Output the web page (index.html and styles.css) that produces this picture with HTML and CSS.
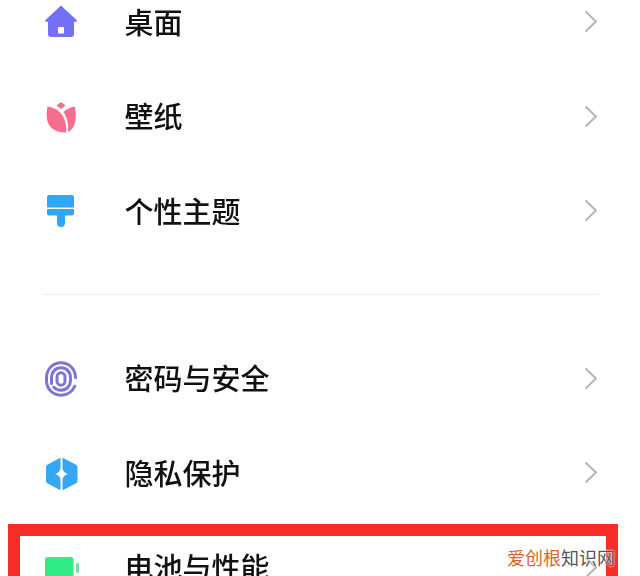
FILE: index.html
```html
<!DOCTYPE html>
<html lang="zh-CN">
<head>
<meta charset="utf-8">
<title>设置</title>
<link rel="stylesheet" href="styles.css">
</head>
<body>
<main class="page">
  <ul class="group">
    <li class="row">
      <svg class="icon" viewBox="0 0 36 36"><path fill="#7470f5" d="M18 .5 33.500 15c.7.7.3 1.800-.7 1.800H31V29a3 3 0 0 1-3 3H8a3 3 0 0 1-3-3V16.800H3.200c-1 0-1.400-1.100-.7-1.800z"/><rect x="15" y="22" width="6" height="6.500" rx="1" fill="#fff"/></svg>
      <span class="label">桌面</span>
      <svg class="chev" viewBox="0 0 14 23"><path d="M1.500 1.500 12 11.500 1.500 21.500"/></svg>
    </li>
    <li class="row">
      <svg class="icon" viewBox="0 0 36 36"><g fill="#f76d8f"><path d="M18 3 22.500 6.500 18 10 13.500 6.500z"/><path d="M4.500 7.500C11 8 20 12.500 22.500 23.500c.9 4 1 7.500.5 10C11 34 3.700 27 3.700 17c0-3.500.2-6.500.8-9.500z"/><path d="M31.800 7.500c.6 3 .9 6 .9 9.500 0 8-2.500 13.500-7.700 16 .4-5 0-9.500-1.300-13.500-.8-2.500-1.900-4.700-3.200-6.500 3-3 6.800-4.800 11.300-5.500z"/></g></svg>
      <span class="label">壁纸</span>
      <svg class="chev" viewBox="0 0 14 23"><path d="M1.500 1.500 12 11.500 1.500 21.500"/></svg>
    </li>
    <li class="row">
      <svg class="icon" viewBox="0 0 36 36"><g fill="#2fa7f5"><path d="M6 1h23a2 2 0 0 1 2 2v10.500H4V3a2 2 0 0 1 2-2z"/><path d="M4 15h27v4.500a2 2 0 0 1-2 2H22V29a4 4 0 0 1-8 0v-7.500H6a2 2 0 0 1-2-2z"/></g></svg>
      <span class="label">个性主题</span>
      <svg class="chev" viewBox="0 0 14 23"><path d="M1.500 1.500 12 11.500 1.500 21.500"/></svg>
    </li>
  </ul>
  <hr class="divider">
  <ul class="group">
    <li class="row">
      <svg class="icon" viewBox="0 0 36 36"><g fill="none" stroke="#7c74d9" stroke-width="3" stroke-linecap="round"><path d="M32.500 16.500C32.500 8 26 1.800 18 1.800S3.500 8 3.500 16.500v3C3.500 28 10 34.200 18 34.200c6 0 11.500-3.500 13.800-9"/><path d="M8.500 22.500v-5.500C8.500 11 12.500 6.800 18 6.800S27.500 11 27.500 17v2C27.500 25 23.500 29.200 18 29.200c-3 0-5.500-1.200-7.200-3"/><rect x="14" y="11.800" width="8" height="12.400" rx="4"/></g></svg>
      <span class="label">密码与安全</span>
      <svg class="chev" viewBox="0 0 14 23"><path d="M1.500 1.500 12 11.500 1.500 21.500"/></svg>
    </li>
    <li class="row">
      <svg class="icon" viewBox="0 0 36 36"><path fill="#35a6f4" stroke="#35a6f4" stroke-width="5" stroke-linejoin="round" d="M18.500 4 32 11v14L18.500 32 5.500 25V11z"/><path fill="none" stroke="#fff" stroke-width="2" d="M18.500 0v36"/><path fill="#fff" d="M18.500 9.500q1 7.300 6.500 8.500-5.500 1.200-6.500 8.500-1-7.300-6.500-8.500 5.500-1.200 6.500-8.500z"/></svg>
      <span class="label">隐私保护</span>
      <svg class="chev" viewBox="0 0 14 23"><path d="M1.500 1.500 12 11.500 1.500 21.500"/></svg>
    </li>
    <li class="row">
      <svg class="icon" viewBox="0 0 36 36"><rect x="2" y="7" width="28.500" height="29" rx="3" fill="#2fec86"/><rect x="33" y="13" width="3" height="10" rx="1" fill="#7fd8a8"/></svg>
      <span class="label">电池与性能</span>
      <svg class="chev" viewBox="0 0 14 23"><path d="M1.500 1.500 12 11.500 1.500 21.500"/></svg>
    </li>
  </ul>
  <div class="highlight"></div>
  <div class="watermark"><span class="wm-a">爱创根</span><span class="wm-b">知识网</span></div>
</main>
</body>
</html>
```
FILE: styles.css
```css
* { box-sizing: border-box; }
html, body { margin: 0; height: 100%; overflow: hidden; background: #fff; }
body { font-family: "Noto Sans CJK SC", "Liberation Sans", sans-serif; color: #111; }
.page { position: relative; width: 640px; height: 576px; overflow: hidden; }
.group { list-style: none; margin: 0; padding: 0; filter: blur(.4px); }
.group:first-child { margin-top: -24.5px; }
.row { display: flex; align-items: center; height: 94.5px; padding-left: 43px; }
.icon { width: 36px; height: 36px; flex: none; }
.label { margin-left: 45.5px; padding-bottom: 4px; font-size: 29px; line-height: 40px; font-weight: 500; flex: 1; }
.chev { width: 14px; height: 23px; flex: none; margin: 0 42px 2px 0; }
.chev path { fill: none; stroke: #b4b4b4; stroke-width: 2; }
.divider { height: 1px; border: 0; margin: 35px 41px 37px 42px; background: #ececec; }
.highlight { position: absolute; left: 8px; top: 524px; width: 610px; height: 80px; border: 12px solid #f92d27; }
.watermark { position: absolute; left: 507px; top: 545px; font-size: 18px; line-height: 24px; white-space: nowrap; text-shadow: 0 0 2px #fff, 0 0 2px #fff; }
.wm-a { color: #d8672b; }
.wm-b { color: #555; }
```
